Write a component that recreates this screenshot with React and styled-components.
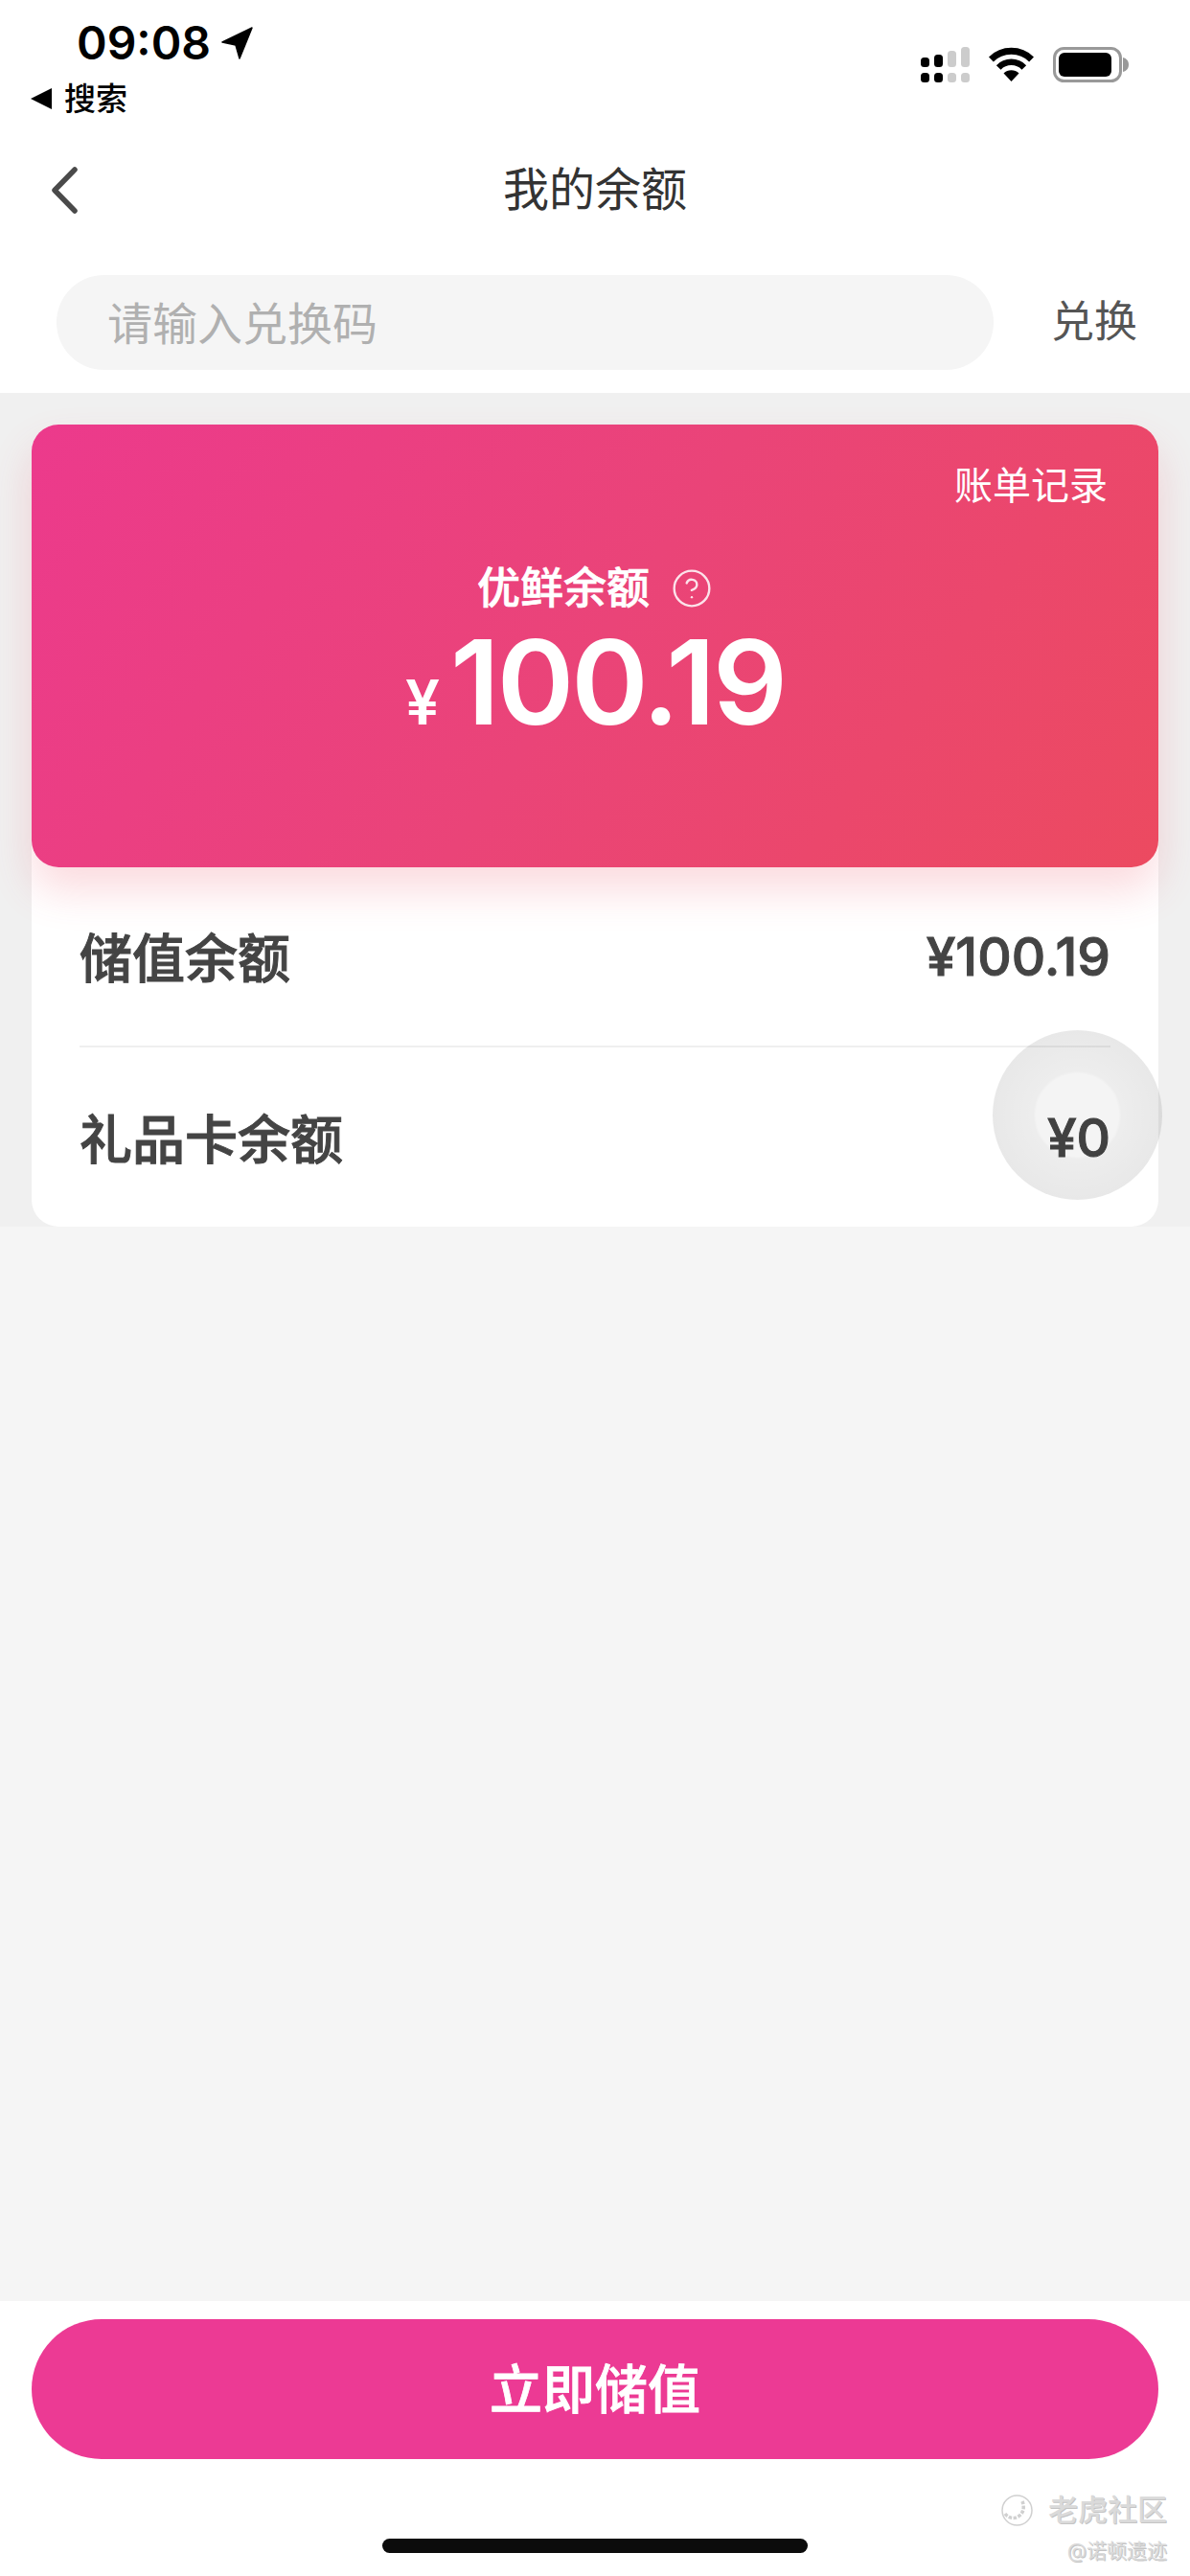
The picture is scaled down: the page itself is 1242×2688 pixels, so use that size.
import styled, { createGlobalStyle } from 'styled-components';
import { CircleHelp } from 'lucide-react';

const GlobalStyle = createGlobalStyle`
	html,
	body {
		margin: 0;
		padding: 0;
		background: #fff;
	}
	* {
		box-sizing: border-box;
	}
`;

const FONT = `Inter, "Noto Sans CJK SC", "Noto Sans", sans-serif`;

const Page = styled.div`
	position: relative;
	width: 1242px;
	height: 2688px;
	display: flex;
	flex-direction: column;
	overflow: hidden;
	background: #fff;
	font-family: ${FONT};
	color: #444;
`;

const StatusBar = styled.header`
	height: 150px;
	padding: 22px 64px 0 32px;
	display: flex;
	justify-content: space-between;
	align-items: flex-start;
`;

const StatusLeft = styled.div`
	display: flex;
	flex-direction: column;
	gap: 16px;
`;

const TimeRow = styled.div`
	padding-left: 48px;
	display: flex;
	align-items: center;
	gap: 11px;
	font-size: 48px;
	line-height: 46px;
	font-weight: 600;
	color: #000;
`;

const BackLink = styled.div`
	display: flex;
	align-items: center;
	gap: 13px;
	font-size: 33px;
	line-height: 38px;
	font-weight: 500;
	color: #000;
`;

const StatusIcons = styled.div`
	margin-top: 27px;
	display: flex;
	align-items: flex-start;
	gap: 20px;
`;

const NavBar = styled.nav`
	position: relative;
	height: 96px;
	display: flex;
	align-items: center;
	justify-content: center;
`;

const BackButton = styled.svg`
	position: absolute;
	left: 54px;
	top: 24px;
`;

const Title = styled.h1`
	margin: 0;
	font-size: 48px;
	line-height: 60px;
	font-weight: 400;
	color: #333;
`;

const RedeemRow = styled.div`
	height: 164px;
	padding: 41px 55px 24px 59px;
	display: flex;
	align-items: center;
	justify-content: space-between;
`;

const CodeField = styled.div`
	width: 978px;
	height: 99px;
	padding: 0 0 5px 53px;
	display: flex;
	align-items: center;
	border-radius: 50px;
	background: #f5f5f5;
	font-size: 47px;
	color: #b0b0b0;
`;

const RedeemButton = styled.span`
	margin-bottom: 8px;
	font-size: 45px;
	color: #555;
`;

const BalanceSection = styled.section`
	padding: 33px 33px 0;
	background: #f0f0f0;
`;

const Panel = styled.div`
	position: relative;
	height: 837px;
	border-radius: 28px;
	background: #fff;
`;

const BalanceCard = styled.div`
	position: relative;
	height: 462px;
	padding: 39px 53px 0;
	display: flex;
	flex-direction: column;
	align-items: center;
	border-radius: 28px;
	background: linear-gradient(125deg, #ec3a8c 0%, #ea4478 50%, #ec4a60 100%);
	box-shadow: 0 24px 44px rgba(236, 74, 96, 0.2);
	color: #fff;
`;

const HistoryLink = styled.div`
	align-self: flex-end;
	font-size: 40px;
	line-height: 50px;
`;

const CardLabel = styled.div`
	margin-top: 54px;
	display: flex;
	align-items: center;
	gap: 22px;
	font-size: 45px;
	line-height: 56px;
	font-weight: 500;
	-webkit-text-stroke: 0.7px #fff;
`;

const Amount = styled.div`
	margin-top: 6px;
	display: flex;
	align-items: baseline;
	gap: 11px;
	font-size: 122px;
	line-height: 128px;
	font-weight: 600;
	letter-spacing: -3px;
`;

const Currency = styled.span`
	font-size: 64px;
	letter-spacing: 0;
`;

const Row = styled.div`
	height: ${(props) => props.$height}px;
	margin: 0 50px;
	display: flex;
	align-items: center;
	justify-content: space-between;
	border-bottom: ${(props) => (props.$divided ? '2px solid #efefef' : 'none')};
	font-size: 55px;
	font-weight: 500;
	color: #444;
	-webkit-text-stroke: 1px #444;
`;

const RowLabel = styled.span`
	margin-bottom: 4px;
`;

const TouchRing = styled.div`
	position: absolute;
	right: -4px;
	top: 632px;
	width: 177px;
	height: 177px;
	border-radius: 50%;
	background: radial-gradient(
		circle,
		rgba(0, 0, 0, 0.045) 0 43px,
		rgba(0, 0, 0, 0.07) 46px,
		rgba(0, 0, 0, 0.09) 88px
	);
`;

const Filler = styled.div`
	flex: 1;
	background: #f5f5f5;
`;

const Footer = styled.footer`
	height: 287px;
	padding: 19px 33px 0;
	display: flex;
	flex-direction: column;
	align-items: center;
`;

const TopUpButton = styled.button`
	width: 100%;
	height: 146px;
	padding: 0 0 8px;
	border: none;
	border-radius: 73px;
	background: #ec3a94;
	font-family: ${FONT};
	font-size: 55px;
	font-weight: 500;
	color: #fff;
	-webkit-text-stroke: 0.8px #fff;
`;

const HomeIndicator = styled.div`
	width: 444px;
	height: 15px;
	margin-top: 83px;
	border-radius: 8px;
	background: #0c0c0c;
`;

const Watermark = styled.div`
	position: absolute;
	right: 24px;
	bottom: 14px;
	display: flex;
	flex-direction: column;
	align-items: flex-end;
	gap: 14px;
	color: #dadada;
	text-shadow: 1px 1px 0 #c4c4c4;
`;

const WatermarkBrand = styled.div`
	display: flex;
	align-items: center;
	gap: 15px;
	font-size: 31px;
	line-height: 34px;
	font-weight: 500;
`;

const WatermarkUser = styled.div`
	font-size: 21px;
	line-height: 24px;
`;

const LocationArrow = () => (
	<svg width="33" height="34" viewBox="0 0 33 34">
		<path d="M32 1 L19 33 L15 19 L1 16 Z" fill="#000" stroke="#000" strokeWidth="1.5" strokeLinejoin="round" />
	</svg>
);

const SignalIcon = () => (
	<svg width="51" height="37" viewBox="0 0 51 37">
		<rect x="0" y="11" width="9" height="10" rx="3.5" fill="#000" />
		<rect x="14" y="8" width="9" height="13" rx="3.5" fill="#000" />
		<rect x="28" y="4" width="9" height="17" rx="3.5" fill="#ccc" />
		<rect x="42" y="0" width="9" height="21" rx="3.5" fill="#ccc" />
		<rect x="0" y="27" width="9" height="10" rx="3.5" fill="#000" />
		<rect x="14" y="27" width="9" height="10" rx="3.5" fill="#000" />
		<rect x="28" y="27" width="9" height="10" rx="3.5" fill="#ccc" />
		<rect x="42" y="27" width="9" height="10" rx="3.5" fill="#ccc" />
	</svg>
);

const WifiIcon = () => (
	<svg width="47" height="37" viewBox="0 0 47 37">
		<path d="M2.4 13 A30 30 0 0 1 44.6 13" fill="none" stroke="#000" strokeWidth="7" />
		<path d="M10.2 21.5 A18.5 18.5 0 0 1 36.8 21.5" fill="none" stroke="#000" strokeWidth="6.5" />
		<path d="M23.5 36 L15.5 27.5 A11.5 11.5 0 0 1 31.5 27.5 Z" fill="#000" />
	</svg>
);

const BatteryIcon = () => (
	<svg width="79" height="37" viewBox="0 0 79 37">
		<rect x="1.5" y="1.5" width="69" height="34" rx="10" fill="none" stroke="#999" strokeWidth="3" />
		<rect x="6" y="6" width="55" height="25" rx="6" fill="#000" />
		<path d="M73 11 C77 12 79 15 79 18.5 C79 22 77 25 73 26 Z" fill="#999" />
	</svg>
);

const WatermarkLogo = () => (
	<svg width="35" height="33" viewBox="0 0 35 33" fill="none" stroke="#d0d0d0" strokeWidth="1.5">
		<circle cx="17.5" cy="16.5" r="15.5" />
		<path d="M5 20 C9 25 15 26 20 22 C25 18 25 12 23 7" strokeWidth="3.5" strokeDasharray="3.5 1.5" />
	</svg>
);

export default function App() {
	return (
		<Page>
			<GlobalStyle />
			<StatusBar>
				<StatusLeft>
					<TimeRow>
						09:08
						<LocationArrow />
					</TimeRow>
					<BackLink>
						<svg width="22" height="22" viewBox="0 0 22 22">
							<path d="M0 11 L22 0 V22 Z" fill="#000" />
						</svg>
						搜索
					</BackLink>
				</StatusLeft>
				<StatusIcons>
					<SignalIcon />
					<WifiIcon />
					<BatteryIcon />
				</StatusIcons>
			</StatusBar>

			<NavBar>
				<BackButton width="27" height="49" viewBox="0 0 27 49">
					<path d="M24 3 L3 24.5 L24 46" fill="none" stroke="#4a4a4a" strokeWidth="5.5" strokeLinecap="round" strokeLinejoin="round" />
				</BackButton>
				<Title>我的余额</Title>
			</NavBar>

			<RedeemRow>
				<CodeField>请输入兑换码</CodeField>
				<RedeemButton>兑换</RedeemButton>
			</RedeemRow>

			<BalanceSection>
				<Panel>
					<BalanceCard>
						<HistoryLink>账单记录</HistoryLink>
						<CardLabel>
							优鲜余额
							<CircleHelp size={44} strokeWidth={1.3} color="rgba(255,255,255,0.85)" />
						</CardLabel>
						<Amount>
							<Currency>¥</Currency>
							100.19
						</Amount>
					</BalanceCard>
					<Row $height={188} $divided>
						<RowLabel>储值余额</RowLabel>
						<span>¥100.19</span>
					</Row>
					<Row $height={187}>
						<RowLabel>礼品卡余额</RowLabel>
						<span>¥0</span>
					</Row>
					<TouchRing />
				</Panel>
			</BalanceSection>

			<Filler />

			<Footer>
				<TopUpButton>立即储值</TopUpButton>
				<HomeIndicator />
			</Footer>

			<Watermark>
				<WatermarkBrand>
					<WatermarkLogo />
					老虎社区
				</WatermarkBrand>
				<WatermarkUser>@诺顿遗迹</WatermarkUser>
			</Watermark>
		</Page>
	);
}
